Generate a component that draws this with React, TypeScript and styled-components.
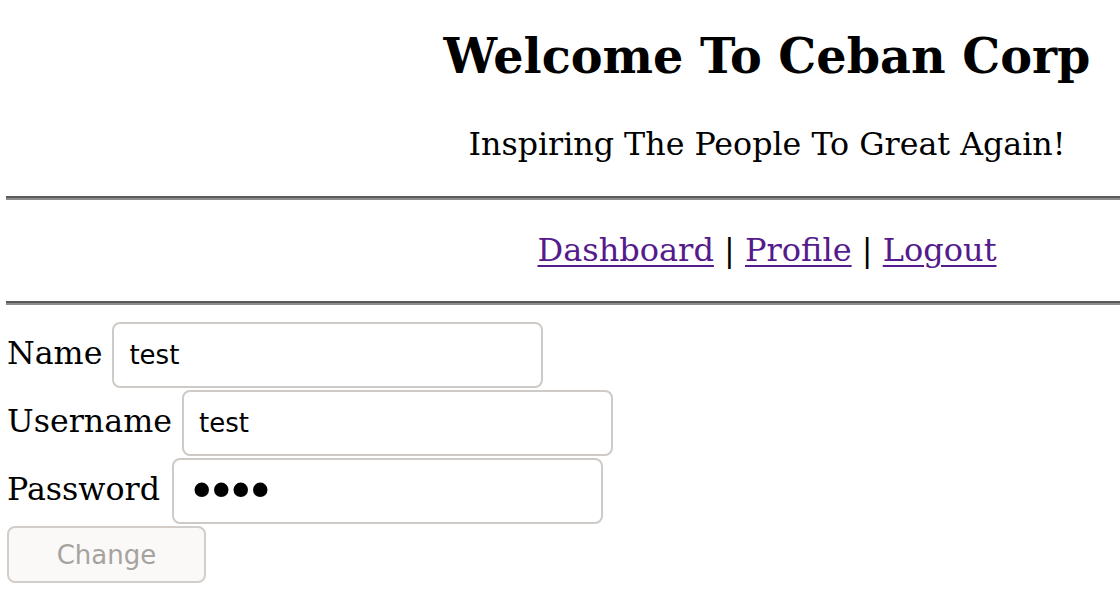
import React from "react";
import styled, { createGlobalStyle } from "styled-components";

const GlobalStyle = createGlobalStyle`
  html, body {
    margin: 0;
    padding: 0;
    background: #ffffff;
    overflow: hidden;
  }
  body {
    font-family: "DejaVu Serif", serif;
    color: #000000;
  }
`;

const Page = styled.div`
  width: 1522px;
  margin-left: 6px;
  font-family: "DejaVu Serif", serif;
`;

const Title = styled.h2`
  margin: 28px 0 42px;
  font-size: 47.7px;
  line-height: 56px;
  font-weight: bold;
  text-align: center;
`;

const Tagline = styled.p`
  margin: 0 0 33px;
  font-size: 31.7px;
  line-height: 37px;
  text-align: center;
`;

const Rule = styled.hr`
  margin: 0;
  height: 0;
  border: none;
  border-top: 2px solid #5a5a5a;
  border-bottom: 2px solid #8c8c8c;
`;

const Nav = styled.p`
  margin: 32px 0 32px;
  font-size: 32px;
  line-height: 37px;
  text-align: center;
`;

const NavLink = styled.a`
  color: #551a8b;
  text-decoration: underline;
  text-decoration-thickness: 2px;
  text-underline-offset: 4px;
`;

const Form = styled.form`
  display: flex;
  flex-direction: column;
  align-items: flex-start;
  gap: 2px;
  margin-top: 17px;
`;

const Row = styled.div`
  display: flex;
  align-items: center;
  gap: 10px;
`;

const Label = styled.label<{ $gap?: number }>`
  font-size: 31.7px;
  line-height: 37px;
  padding-bottom: 4px;
  margin-left: 1px;
  margin-right: ${(p) => p.$gap ?? 0}px;
`;

const Field = styled.input<{ $mask?: boolean }>`
  box-sizing: border-box;
  width: 431px;
  height: 66px;
  padding: 0 ${(p) => (p.$mask ? "13px" : "15px")};
  border: 2px solid #cfcac5;
  border-radius: 8px;
  background: #ffffff;
  color: #000000;
  font-family: "DejaVu Sans", sans-serif;
  font-size: ${(p) => (p.$mask ? "50px" : "26px")};
  line-height: ${(p) => (p.$mask ? "1" : "normal")};
  letter-spacing: ${(p) => (p.$mask ? "-10px" : "normal")};
  outline: none;
`;

const Button = styled.button`
  box-sizing: border-box;
  width: 199px;
  height: 57px;
  margin-left: 1px;
  border: 2px solid #d2cdc8;
  border-radius: 8px;
  background: #faf9f8;
  color: #a6a29e;
  font-family: "DejaVu Sans", sans-serif;
  font-size: 26px;
`;

export default function App() {
  return (
    <>
      <GlobalStyle />
      <Page>
        <Title>Welcome To Ceban Corp</Title>
        <Tagline>Inspiring The People To Great Again!</Tagline>
        <Rule />
        <Nav>
          <NavLink href="#">Dashboard</NavLink> | <NavLink href="#">Profile</NavLink> |{" "}
          <NavLink href="#">Logout</NavLink>
        </Nav>
        <Rule />
        <Form onSubmit={(e) => e.preventDefault()}>
          <Row>
            <Label htmlFor="name">Name</Label>
            <Field id="name" type="text" defaultValue="test" />
          </Row>
          <Row>
            <Label htmlFor="username">Username</Label>
            <Field id="username" type="text" defaultValue="test" />
          </Row>
          <Row>
            <Label htmlFor="password" $gap={2}>
              Password
            </Label>
            <Field id="password" type="password" defaultValue="test" $mask />
          </Row>
          <Button type="submit" disabled>
            Change
          </Button>
        </Form>
      </Page>
    </>
  );
}
